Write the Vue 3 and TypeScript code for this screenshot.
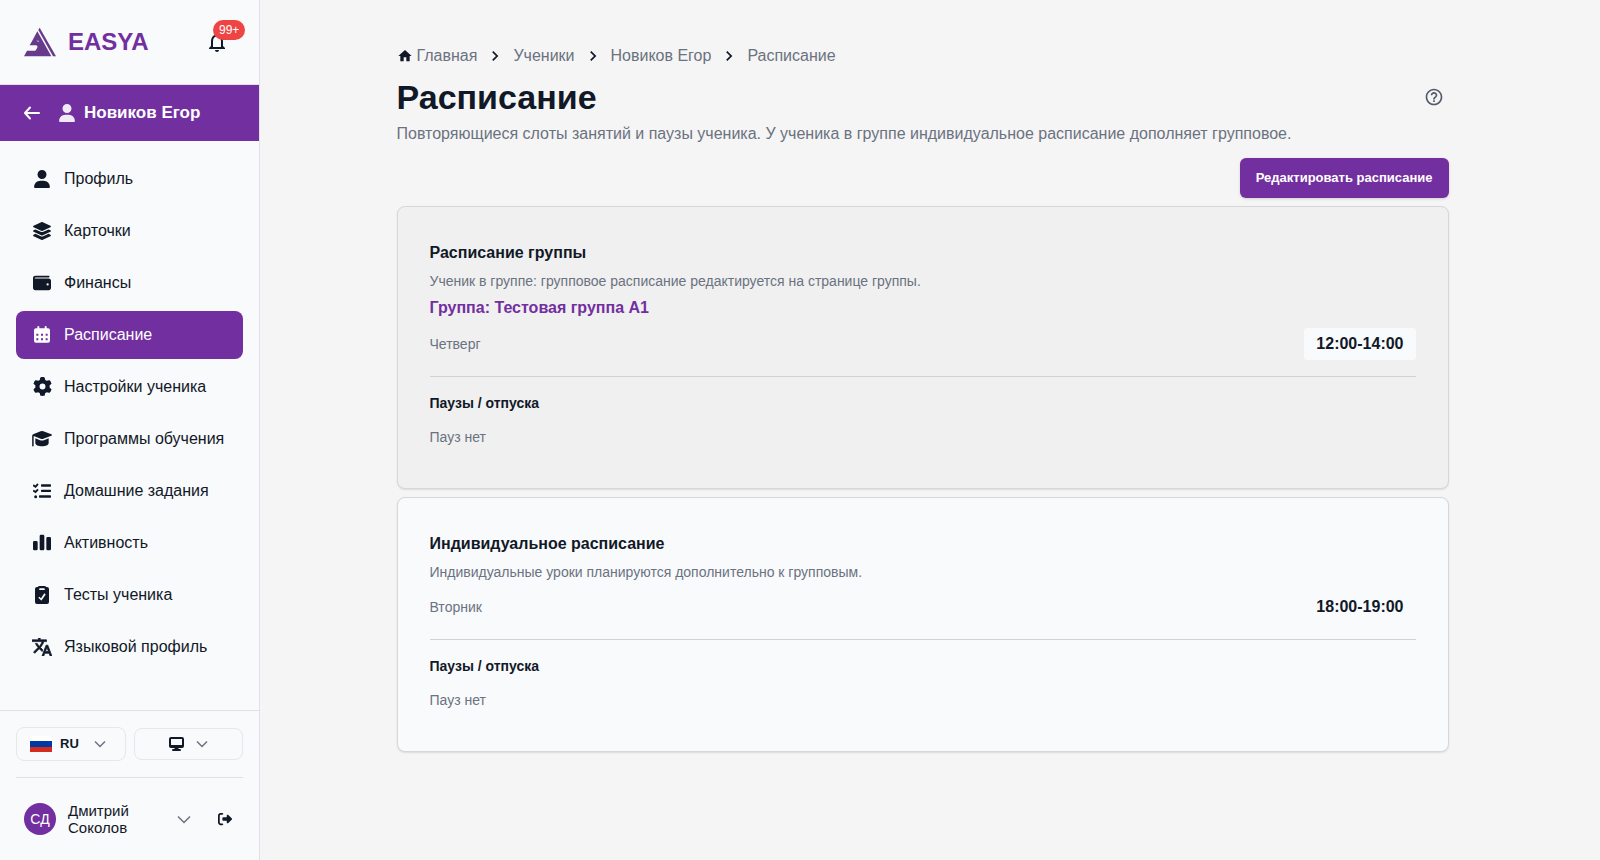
<script setup lang="ts">
import { ref } from 'vue'

interface NavItem {
  label: string
  viewBox: string
  path: string
  width: number
  height: number
  active?: boolean
  bold?: boolean
}

interface Schedule {
  title: string
  note: string
  group?: string
  day: string
  time: string
}

const userPath =
  'M224 256A128 128 0 1 0 224 0a128 128 0 1 0 0 256zm-45.7 48C79.8 304 0 383.8 0 482.3C0 498.7 13.3 512 29.7 512l388.6 0c16.4 0 29.7-13.3 29.7-29.7C448 383.8 368.2 304 269.7 304l-91.4 0z'

const nav: NavItem[] = [
  { label: 'Профиль', viewBox: '0 0 448 512', width: 16, height: 18, path: userPath },
  {
    label: 'Карточки',
    viewBox: '0 0 576 512',
    width: 20,
    height: 18,
    path: 'M264.5 5.2c14.9-6.9 32.1-6.9 47 0l218.6 101c8.5 3.9 13.9 12.4 13.9 21.8s-5.4 17.9-13.9 21.8l-218.6 101c-14.9 6.9-32.1 6.9-47 0L45.9 149.8C37.4 145.8 32 137.3 32 128s5.4-17.9 13.9-21.8L264.5 5.2zM476.9 209.6l53.2 24.6c8.5 3.9 13.9 12.4 13.9 21.8s-5.4 17.9-13.9 21.8l-218.6 101c-14.9 6.9-32.1 6.9-47 0L45.9 277.8C37.4 273.8 32 265.3 32 256s5.4-17.9 13.9-21.8l53.2-24.6 152 70.2c23.4 10.8 50.4 10.8 73.8 0l152-70.2zm-152 198.2l152-70.2 53.2 24.6c8.5 3.9 13.9 12.4 13.9 21.8s-5.4 17.9-13.9 21.8l-218.6 101c-14.9 6.9-32.1 6.9-47 0L45.9 405.8C37.4 401.8 32 393.3 32 384s5.4-17.9 13.9-21.8l53.2-24.6 152 70.2c23.4 10.8 50.4 10.8 73.8 0z',
  },
  {
    label: 'Финансы',
    viewBox: '0 0 512 512',
    width: 18,
    height: 18,
    path: 'M64 48C28.7 48 0 76.7 0 112V400c0 35.3 28.7 64 64 64H448c35.3 0 64-28.7 64-64V192c0-35.3-28.7-64-64-64H72c-13.3 0-24-7-24-16s10.7-16 24-16H448c13.3 0 24-10.7 24-24s-10.7-24-24-24H64zM416 264a32 32 0 1 1 0 64 32 32 0 1 1 0-64z',
  },
  {
    label: 'Расписание',
    viewBox: '0 0 48 51',
    width: 16,
    height: 17,
    active: true,
    path: 'M10 3a3 3 0 0 1 6 0v4h16v-4a3 3 0 0 1 6 0v4h4a6 6 0 0 1 6 6v31a6 6 0 0 1-6 6h-36a6 6 0 0 1-6-6v-31a6 6 0 0 1 6-6h4zM7 23v6h6v-6zM21 23v6h6v-6zM35 23v6h6v-6zM7 37v6h6v-6zM21 37v6h6v-6zM35 37v6h6v-6z',
  },
  {
    label: 'Настройки ученика',
    viewBox: '0 0 512 512',
    width: 19,
    height: 19,
    path: 'M495.9 166.6c3.2 8.7 .5 18.4-6.4 24.6l-43.3 39.4c1.1 8.3 1.7 16.8 1.7 25.4s-.6 17.1-1.7 25.4l43.3 39.4c6.9 6.2 9.6 15.9 6.4 24.6c-4.4 11.9-9.7 23.3-15.8 34.3l-4.7 8.1c-6.6 11-14 21.4-22.1 31.2c-5.9 7.2-15.7 9.6-24.5 6.8l-55.7-17.7c-13.4 10.3-28.2 18.9-44 25.4l-12.5 57.1c-2 9.1-9 16.3-18.2 17.8c-13.8 2.3-28 3.5-42.5 3.5s-28.7-1.2-42.5-3.5c-9.2-1.5-16.2-8.7-18.2-17.8l-12.5-57.1c-15.8-6.5-30.6-15.1-44-25.4L83.1 425.9c-8.8 2.8-18.6 .3-24.5-6.8c-8.1-9.8-15.5-20.2-22.1-31.2l-4.7-8.1c-6.1-11-11.4-22.4-15.8-34.3c-3.2-8.7-.5-18.4 6.4-24.6l43.3-39.4C64.6 273.1 64 264.6 64 256s.6-17.1 1.7-25.4L22.4 191.2c-6.9-6.2-9.6-15.9-6.4-24.6c4.4-11.9 9.7-23.3 15.8-34.3l4.7-8.1c6.6-11 14-21.4 22.1-31.2c5.9-7.2 15.7-9.6 24.5-6.8l55.7 17.7c13.4-10.3 28.2-18.9 44-25.4l12.5-57.1c2-9.1 9-16.3 18.2-17.8C227.3 1.2 241.5 0 256 0s28.7 1.2 42.5 3.5c9.2 1.5 16.2 8.7 18.2 17.8l12.5 57.1c15.8 6.5 30.6 15.1 44 25.4l55.7-17.7c8.8-2.8 18.6-.3 24.5 6.8c8.1 9.8 15.5 20.2 22.1 31.2l4.7 8.1c6.1 11 11.4 22.4 15.8 34.3zM256 336a80 80 0 1 0 0-160 80 80 0 1 0 0 160z',
  },
  {
    label: 'Программы обучения',
    viewBox: '0 0 60 51',
    width: 20,
    height: 17,
    path: 'M30 3q2 0 4 1l24 9q4 2 0 4l-24 9q-4 1.5-8 0l-21-8v29a2.2 2.2 0 0 1-4.500 0v-30q0-3 3-4.500l22.500-8.500q2-1 4-1zM10 25l14 5.500q6 2 12 0l14-5.500v14c0 6-9 10-20 10s-20-4-20-10z',
  },
  {
    label: 'Домашние задания',
    viewBox: '0 0 54 48',
    width: 18,
    height: 16,
    path: 'M13 1l4 4-9 10-9-6 3-5 5 3.500zM13 17l4 4-9 10-9-6 3-5 5 3.500zM8 36.500a4.500 4.500 0 1 1 0 9 4.500 4.500 0 0 1 0-9zM26 4h26a2 2 0 0 1 2 2v3a2 2 0 0 1-2 2h-26a2 2 0 0 1-2-2v-3a2 2 0 0 1 2-2zM26 20h26a2 2 0 0 1 2 2v3a2 2 0 0 1-2 2h-26a2 2 0 0 1-2-2v-3a2 2 0 0 1 2-2zM20 37h32a2 2 0 0 1 2 2v3a2 2 0 0 1-2 2h-32a2 2 0 0 1-2-2v-3a2 2 0 0 1 2-2z',
  },
  {
    label: 'Активность',
    viewBox: '0 0 54 51',
    width: 18,
    height: 17,
    path: 'M4 21h6a4 4 0 0 1 4 4v20a4 4 0 0 1-4 4h-6a4 4 0 0 1-4-4v-20a4 4 0 0 1 4-4zM24 2h6a4 4 0 0 1 4 4v39a4 4 0 0 1-4 4h-6a4 4 0 0 1-4-4v-39a4 4 0 0 1 4-4zM44 9h6a4 4 0 0 1 4 4v32a4 4 0 0 1-4 4h-6a4 4 0 0 1-4-4v-32a4 4 0 0 1 4-4z',
  },
  {
    label: 'Тесты ученика',
    viewBox: '0 0 42 54',
    width: 14,
    height: 18,
    path: 'M14 0h14q4 0 6 3h2a6 6 0 0 1 6 6v39a6 6 0 0 1-6 6h-30a6 6 0 0 1-6-6v-39a6 6 0 0 1 6-6h2q2-3 6-3zM15 7a2.500 2.500 0 0 0 0 5h12a2.500 2.500 0 0 0 0-5zM28 22l-10 15-5-5-3 3 8 8q1 1 2-.5l12-17z',
  },
  {
    label: 'Языковой профиль',
    viewBox: '1 2 22 20',
    width: 20,
    height: 18,
    bold: true,
    path: 'M12.870 15.070l-2.540-2.510.03-.03c1.740-1.940 2.980-4.170 3.710-6.530H17V4h-7V2H8v2H1v1.990h11.170C11.500 7.920 10.440 9.750 9 11.350 8.070 10.320 7.300 9.190 6.690 8h-2c.73 1.630 1.730 3.170 2.980 4.560l-5.090 5.020L4 19l5-5 3.110 3.110.76-2.040zM18.500 10h-2L12 22h2l1.120-3h4.750L21 22h2l-4.500-12zm-2.620 7l1.620-4.330L19.120 17h-3.240z',
  },
]

const crumbs: string[] = ['Ученики', 'Новиков Егор', 'Расписание']

const schedules: Schedule[] = [
  {
    title: 'Расписание группы',
    note: 'Ученик в группе: групповое расписание редактируется на странице группы.',
    group: 'Группа: Тестовая группа A1',
    day: 'Четверг',
    time: '12:00-14:00',
  },
  {
    title: 'Индивидуальное расписание',
    note: 'Индивидуальные уроки планируются дополнительно к групповым.',
    day: 'Вторник',
    time: '18:00-19:00',
  },
]

const language = ref('RU')
</script>

<template>
  <div class="layout">
    <aside class="sidebar">
      <header class="brand">
        <a class="brand-link" href="#">
          <svg width="32" height="30" viewBox="0 0 96 90" fill="#673a8b" aria-hidden="true">
            <path d="M40 13 82 88H0L9 71H34Q38 66 41 59L37 55H17L24 43Z" />
            <path d="M43 9 47 2 96 88H87Z" />
            <path d="M37 41h7v4z" fill="#f9fafc" />
          </svg>
          <span>EASYA</span>
        </a>
        <button class="bell" type="button" aria-label="Уведомления">
          <svg width="24" height="24" viewBox="0 0 24 24" fill="currentColor" aria-hidden="true">
            <path d="M12 22c1.100 0 2-.9 2-2h-4c0 1.100.9 2 2 2zm6-6v-5c0-3.070-1.630-5.640-4.500-6.320V4c0-.83-.67-1.500-1.500-1.500s-1.500.67-1.500 1.500v.68C7.640 5.360 6 7.920 6 11v5l-2 2v1h16v-1l-2-2zm-2 1H8v-6c0-2.480 1.510-4.500 4-4.500s4 2.020 4 4.500v6z" />
          </svg>
          <span class="badge">99+</span>
        </button>
      </header>

      <div class="student">
        <button class="back" type="button" aria-label="Назад">
          <svg width="16" height="14" viewBox="0 0 16 14" fill="none" stroke="currentColor" stroke-width="2" stroke-linecap="round" stroke-linejoin="round" aria-hidden="true">
            <path d="M15 7H1M6 1.500 1 7l5 5.500" />
          </svg>
        </button>
        <svg class="student-icon" width="16" height="18" viewBox="0 0 448 512" fill="currentColor" aria-hidden="true">
          <path :d="userPath" />
        </svg>
        <span>Новиков Егор</span>
      </div>

      <nav class="nav">
        <a v-for="item in nav" :key="item.label" href="#" class="nav-item" :class="{ active: item.active }">
          <span class="nav-icon" :class="{ bold: item.bold }">
            <svg :width="item.width" :height="item.height" :viewBox="item.viewBox" fill="currentColor" fill-rule="evenodd" aria-hidden="true">
              <path :d="item.path" />
            </svg>
          </span>
          <span>{{ item.label }}</span>
        </a>
      </nav>

      <footer class="side-footer">
        <div class="prefs">
          <label class="pref language">
            <svg width="22" height="16" viewBox="0 0 22 16" aria-hidden="true">
              <path fill="#fff" d="M0 0h22v6H0z" />
              <path fill="#0039a6" d="M0 5h22v6H0z" />
              <path fill="#d52b1e" d="M0 11h22v5H0z" />
            </svg>
            <select v-model="language" aria-label="Язык">
              <option>RU</option>
            </select>
            <svg class="chevron" width="12" height="8" viewBox="0 0 12 8" aria-hidden="true"><path d="M1 1.500 6 6.500l5-5" /></svg>
          </label>
          <button class="pref theme" type="button" aria-label="Тема">
            <svg width="15" height="14" viewBox="0 0 15 14" fill="currentColor" fill-rule="evenodd" aria-hidden="true">
              <path d="M2 0h11a2 2 0 0 1 2 2v7a2 2 0 0 1-2 2H9.500v1H11a1 1 0 0 1 0 2H4a1 1 0 0 1 0-2h1.500v-1H2a2 2 0 0 1-2-2V2a2 2 0 0 1 2-2zM2 2v6h11V2z" />
            </svg>
            <svg class="chevron" width="12" height="8" viewBox="0 0 12 8" aria-hidden="true"><path d="M1 1.500 6 6.500l5-5" /></svg>
          </button>
        </div>
        <div class="account">
          <button class="profile" type="button">
            <span class="avatar">СД</span>
            <span class="name">Дмитрий Соколов</span>
            <svg class="chevron" width="14" height="9" viewBox="0 0 14 9" aria-hidden="true"><path d="M1 1.500 7 7.500l6-6" /></svg>
          </button>
          <button class="logout" type="button" aria-label="Выйти">
            <svg width="14" height="14" viewBox="0 0 512 512" fill="currentColor" aria-hidden="true">
              <path d="M377.9 105.9L500.7 228.7c7.2 7.2 11.3 17.1 11.3 27.3s-4.100 20.100-11.300 27.300L377.900 406.100c-6.400 6.400-15 9.900-24 9.900c-18.700 0-33.900-15.200-33.900-33.900l0-62.100-128 0c-17.700 0-32-14.300-32-32l0-64c0-17.700 14.300-32 32-32l128 0 0-62.100c0-18.700 15.200-33.900 33.900-33.900c9 0 17.600 3.600 24 9.900zM160 96L96 96c-17.700 0-32 14.300-32 32l0 256c0 17.700 14.300 32 32 32l64 0c17.700 0 32 14.300 32 32s-14.300 32-32 32l-64 0c-53 0-96-43-96-96L0 128C0 75 43 32 96 32l64 0c17.700 0 32 14.300 32 32s-14.300 32-32 32z" />
            </svg>
          </button>
        </div>
      </footer>
    </aside>

    <main class="main">
      <div class="container">
        <nav class="crumbs" aria-label="Навигация">
          <a href="#" class="home">
            <svg width="16" height="16" viewBox="0 0 24 24" fill="currentColor" aria-hidden="true"><path d="M10 20v-6h4v6h5v-8h3L12 3 2 12h3v8z" /></svg>
            <span>Главная</span>
          </a>
          <template v-for="crumb in crumbs" :key="crumb">
            <svg class="divider" width="20" height="20" viewBox="0 0 24 24" fill="currentColor" aria-hidden="true"><path d="M8.590 16.590 13.170 12 8.590 7.410 10 6l6 6-6 6z" /></svg>
            <a href="#">{{ crumb }}</a>
          </template>
        </nav>

        <div class="heading">
          <h1>Расписание</h1>
          <button class="help" type="button" aria-label="Помощь">
            <svg width="20" height="20" viewBox="0 0 24 24" fill="currentColor" aria-hidden="true">
              <path d="M11 18h2v-2h-2v2zm1-16C6.480 2 2 6.480 2 12s4.480 10 10 10 10-4.480 10-10S17.520 2 12 2zm0 18c-4.410 0-8-3.590-8-8s3.590-8 8-8 8 3.590 8 8-3.590 8-8 8zm0-14c-2.210 0-4 1.790-4 4h2c0-1.100.9-2 2-2s2 .9 2 2c0 2-3 1.750-3 5h2c0-2.250 3-2.500 3-5 0-2.210-1.790-4-4-4z" />
            </svg>
          </button>
        </div>
        <p class="subtitle">Повторяющиеся слоты занятий и паузы ученика. У ученика в группе индивидуальное расписание дополняет групповое.</p>

        <div class="actions">
          <button class="primary" type="button">Редактировать расписание</button>
        </div>

        <section v-for="item in schedules" :key="item.title" class="card" :class="{ muted: item.group }">
          <h2>{{ item.title }}</h2>
          <p class="note">{{ item.note }}</p>
          <a v-if="item.group" class="group" href="#">{{ item.group }}</a>
          <div class="slot">
            <span>{{ item.day }}</span>
            <strong>{{ item.time }}</strong>
          </div>
          <div class="pauses">
            <h3>Паузы / отпуска</h3>
            <p>Пауз нет</p>
          </div>
        </section>
      </div>
    </main>
  </div>
</template>

<style>
body {
  margin: 0;
  background: #f5f5f5;
}
</style>

<style scoped>
.layout {
  display: grid;
  grid-template-columns: 260px 1fr;
  min-height: 100vh;
  color: #111827;
  font: 16px/24px "Liberation Sans", Arial, sans-serif;
}

.layout *,
.layout {
  box-sizing: border-box;
}

a {
  color: inherit;
  text-decoration: none;
}

button,
select {
  padding: 0;
  border: 0;
  background: none;
  color: inherit;
  font: inherit;
  cursor: pointer;
}

svg {
  display: block;
  flex-shrink: 0;
}

h1,
h2,
h3,
p {
  margin: 0;
}

.sidebar {
  display: flex;
  flex-direction: column;
  border-right: 1px solid #e0e2e5;
  background: #f9fafc;
}

.brand {
  display: flex;
  align-items: center;
  justify-content: space-between;
  height: 85px;
  padding: 0 30px 0 24px;
  border-bottom: 1px solid #e0e2e5;
}

.brand-link {
  display: flex;
  align-items: center;
  gap: 12px;
  color: #722fa0;
  font-size: 24px;
  font-weight: 700;
}

.bell {
  position: relative;
}

.badge {
  position: absolute;
  top: -10px;
  left: 8px;
  padding: 0 6px;
  border-radius: 10px;
  background: #ef4444;
  color: #fff;
  font-size: 12px;
  line-height: 20px;
}

.student {
  display: flex;
  align-items: center;
  height: 56px;
  padding: 0 24px;
  background: #722fa0;
  color: #fff;
  font-size: 17px;
  font-weight: 700;
}

.student-icon {
  margin: 0 9px 0 19px;
  opacity: 0.9;
}

.nav {
  display: flex;
  flex: 1;
  flex-direction: column;
  gap: 4px;
  padding: 14px 16px;
}

.nav-item {
  display: flex;
  align-items: center;
  gap: 12px;
  height: 48px;
  padding: 0 16px;
  border-radius: 8px;
}

.nav-item.active {
  background: #722fa0;
  color: #fff;
}

.nav-icon {
  display: flex;
  justify-content: center;
  width: 20px;
  padding-bottom: 1px;
}

.nav-icon.bold {
  stroke: currentColor;
  stroke-width: 0.8;
}

.side-footer {
  padding: 16px 16px 24px;
  border-top: 1px solid #e0e2e5;
}

.prefs {
  display: grid;
  grid-template-columns: 1fr 1fr;
  align-items: center;
  gap: 8px;
  padding-bottom: 16px;
  border-bottom: 1px solid #e0e2e5;
}

.pref {
  display: flex;
  align-items: center;
  justify-content: center;
  height: 32px;
  border: 1px solid #e5e7eb;
  border-radius: 8px;
}

.language {
  justify-content: flex-start;
  gap: 8px;
  height: 34px;
  padding-left: 13px;
}

.language select {
  width: 26px;
  appearance: none;
  font-size: 13px;
  font-weight: 700;
}

.theme {
  gap: 12px;
}

.chevron {
  fill: none;
  stroke: #6b7280;
  stroke-width: 1.5;
}

.account {
  display: flex;
  align-items: center;
  padding: 24px 8px 0;
}

.profile {
  display: flex;
  flex: 1;
  align-items: center;
  gap: 12px;
  text-align: left;
}

.avatar {
  width: 32px;
  border-radius: 50%;
  background: #722fa0;
  color: #fff;
  font-size: 14px;
  line-height: 32px;
  text-align: center;
}

.name {
  flex: 1;
  font-size: 15px;
  line-height: 17px;
}

.logout {
  margin: 0 3px 0 27px;
}

.main {
  padding: 44px 15px 24px 0;
}

.container {
  max-width: 1100px;
  margin: 0 auto;
  padding: 0 24px;
}

.crumbs {
  display: flex;
  align-items: center;
  gap: 8px;
  color: #6b7280;
}

.home {
  display: flex;
  align-items: center;
  gap: 4px;
}

.home svg,
.divider {
  color: #111827;
}

.heading {
  display: flex;
  align-items: center;
  justify-content: space-between;
  margin-top: 8px;
  padding-right: 5px;
}

h1 {
  font-size: 34px;
  line-height: 42px;
}

.help {
  color: #555b6a;
}

.subtitle {
  margin-top: 4px;
  color: #6b7280;
}

.actions {
  display: flex;
  justify-content: flex-end;
  margin-top: 12px;
}

.primary {
  height: 40px;
  padding: 0 16px;
  border-radius: 6px;
  background: #722fa0;
  box-shadow: 0 1px 3px rgb(0 0 0 / 15%);
  color: #fff;
  font-size: 13px;
  font-weight: 700;
}

.card {
  margin-top: 8px;
  padding: 32px;
  border: 1px solid #d5d7da;
  border-radius: 8px;
  background: #f9fafc;
  box-shadow: 0 1px 2px rgb(0 0 0 / 10%);
}

.card.muted {
  background: #f0f0f0;
}

h2 {
  font-size: 16px;
  line-height: 28px;
}

.note {
  margin-top: 4px;
  color: #6b7280;
  font-size: 14px;
  line-height: 21px;
}

.group {
  display: block;
  margin-top: 4px;
  color: #722fa0;
  font-weight: 700;
}

.slot {
  display: flex;
  align-items: center;
  justify-content: space-between;
  padding: 8px 0 16px;
  color: #6b7280;
  font-size: 14px;
}

.slot strong {
  padding: 4px 12px;
  border-radius: 4px;
  background: #f9fafc;
  color: #111827;
  font-size: 16px;
}

.pauses {
  padding-top: 16px;
  border-top: 1px solid #d1d3d6;
  font-size: 14px;
}

h3 {
  font-size: 14px;
  line-height: 21px;
}

.pauses p {
  margin-top: 4px;
  padding: 8px 0;
  color: #6b7280;
  line-height: 22px;
}
</style>
